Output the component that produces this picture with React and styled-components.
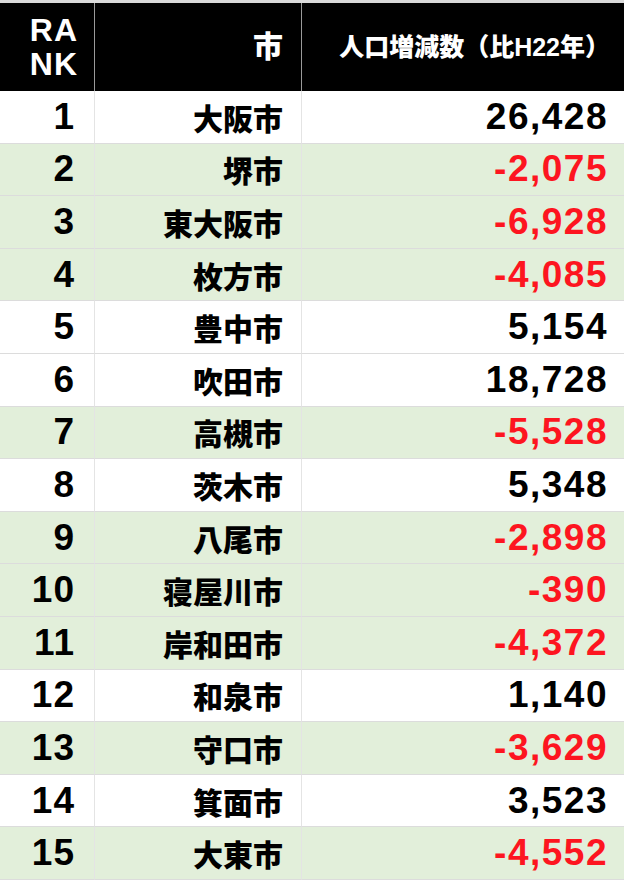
import React from 'react'
import styled, { createGlobalStyle } from 'styled-components'

const rows = [
	{ rank: 1, city: '大阪市', diff: '26,428' },
	{ rank: 2, city: '堺市', diff: '-2,075' },
	{ rank: 3, city: '東大阪市', diff: '-6,928' },
	{ rank: 4, city: '枚方市', diff: '-4,085' },
	{ rank: 5, city: '豊中市', diff: '5,154' },
	{ rank: 6, city: '吹田市', diff: '18,728' },
	{ rank: 7, city: '高槻市', diff: '-5,528' },
	{ rank: 8, city: '茨木市', diff: '5,348' },
	{ rank: 9, city: '八尾市', diff: '-2,898' },
	{ rank: 10, city: '寝屋川市', diff: '-390' },
	{ rank: 11, city: '岸和田市', diff: '-4,372' },
	{ rank: 12, city: '和泉市', diff: '1,140' },
	{ rank: 13, city: '守口市', diff: '-3,629' },
	{ rank: 14, city: '箕面市', diff: '3,523' },
	{ rank: 15, city: '大東市', diff: '-4,552' }
]

const GlobalStyle = createGlobalStyle`
	html, body {
		margin: 0;
		padding: 0;
		background: #fff;
	}
	body {
		font-family: 'Liberation Sans', 'Noto Sans CJK JP', sans-serif;
		font-weight: 900;
	}
`

const Table = styled.div`
	width: 624px;
	border-top: 3px solid #dadada;
	display: grid;
	grid-template-columns: 95px 207px 1fr;
`

const HeadCell = styled.div`
	height: 88px;
	box-sizing: border-box;
	background: #000;
	color: #fff;
	display: flex;
	align-items: center;
	justify-content: flex-end;
	text-align: right;
	padding-right: ${p => p.pad}px;
	font-size: ${p => p.size}px;
	line-height: 1.2;
	border-right: ${p => (p.last ? 'none' : '1px solid #9a9a9a')};
	white-space: nowrap;
`

const RankLabel = styled.span`
	display: flex;
	flex-direction: column;
	align-items: flex-end;
	font-size: 32px;
	line-height: 34px;
	letter-spacing: 1px;
`

const Cell = styled.div`
	height: 52.6px;
	box-sizing: border-box;
	background: ${p => (p.green ? '#e2efda' : '#fff')};
	color: ${p => (p.neg ? '#fd1520' : '#000')};
	display: flex;
	align-items: center;
	justify-content: flex-end;
	padding-right: ${p => p.pad}px;
	font-size: ${p => p.size}px;
	letter-spacing: ${p => p.ls || 0}px;
	border-bottom: 1px solid #dcdcdc;
	border-right: ${p => (p.last ? 'none' : '1px solid #e4e4e4')};
	white-space: nowrap;
`

const greenRows = [2, 3, 4, 7, 9, 10, 11, 13, 15]

const App = () => {
	return (
		<>
			<GlobalStyle />
			<Table>
				<HeadCell pad={16}>
					<RankLabel>
						<span>RA</span>
						<span>NK</span>
					</RankLabel>
				</HeadCell>
				<HeadCell pad={18} size={30}>
					市
				</HeadCell>
				<HeadCell pad={14} size={25} last>
					人口増減数（比H22年）
				</HeadCell>
				{rows.map(r => {
					const green = greenRows.includes(r.rank)
					const neg = r.diff.startsWith('-')
					return (
						<React.Fragment key={r.rank}>
							<Cell green={green} pad={19} size={37} ls={1}>
								{r.rank}
							</Cell>
							<Cell green={green} pad={18} size={30}>
								{r.city}
							</Cell>
							<Cell green={green} neg={neg} pad={16} size={37} ls={1.5} last>
								{r.diff}
							</Cell>
						</React.Fragment>
					)
				})}
			</Table>
		</>
	)
}

export default App
